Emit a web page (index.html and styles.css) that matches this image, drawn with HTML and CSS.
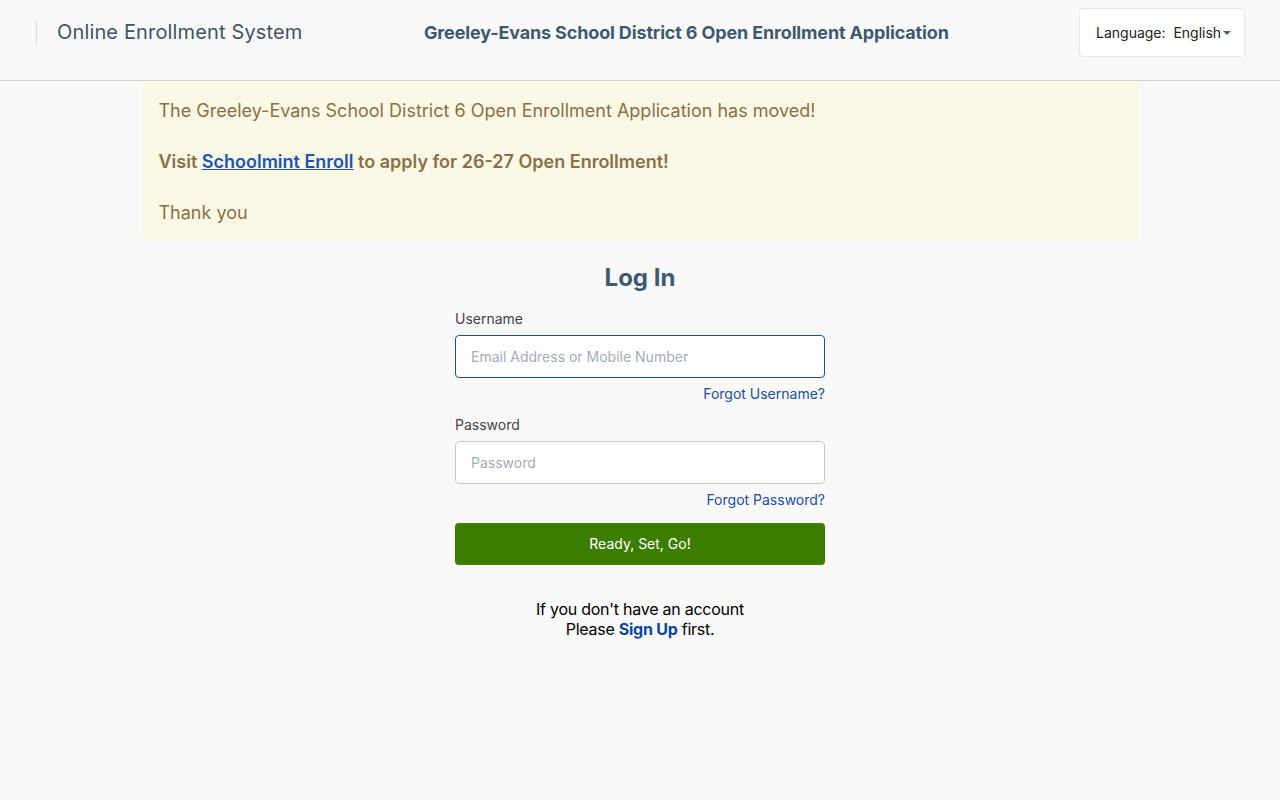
FILE: index.html
```html
<!DOCTYPE html>
<html>
  <head>
    <meta charset="utf-8">
    <meta name="viewport" content="width=device-width, initial-scale=1">
    <title>Online Enrollment System</title>
    <link rel="stylesheet" href="styles.css">
  </head>
  <body>
    <header class="topbar">
      <div class="brand">Online Enrollment System</div>
      <div class="district">Greeley-Evans School District 6 Open Enrollment Application</div>
      <button class="lang" type="button">Language:&nbsp; English<span class="caret"></span></button>
    </header>

    <main>
      <div class="notice">
        The Greeley-Evans School District 6 Open Enrollment Application has moved!<br><br>
        <strong>Visit <a href="#">Schoolmint Enroll</a> to apply for 26-27 Open Enrollment!</strong><br><br>
        Thank you
      </div>

      <section class="login">
        <h1>Log In</h1>
        <form>
          <label for="username">Username</label>
          <input id="username" class="focused" type="text" placeholder="Email Address or Mobile Number">
          <a class="forgot" href="#">Forgot Username?</a>

          <label for="password">Password</label>
          <input id="password" type="password" placeholder="Password">
          <a class="forgot" href="#">Forgot Password?</a>

          <button class="go" type="button">Ready, Set, Go!</button>
        </form>
        <p class="signup">If you don't have an account<br>Please <a href="#">Sign Up</a> first.</p>
      </section>
    </main>
  </body>
</html>
```

FILE: styles.css
```css
body {
  margin: 0;
  background: #f9f9f9;
  font-family: Inter, "Noto Sans", sans-serif;
  color: #222;
}

.topbar {
  height: 80px;
  border-bottom: 1px solid #d0d0d0;
  display: flex;
  align-items: flex-start;
  padding: 0 35px 0 36px;
}

.brand {
  margin-top: 20px;
  height: 25px;
  width: 367px;
  border-left: 1px solid #dcdcdc;
  padding-left: 20px;
  font-size: 20px;
  line-height: 24px;
  letter-spacing: 0.15px;
  color: #3e5565;
}

.district {
  margin-top: 21px;
  font-size: 18px;
  line-height: 24px;
  font-weight: 700;
  letter-spacing: -0.15px;
  color: #3f5a6f;
  flex: 1;
}

.lang {
  margin-top: 8px;
  width: 166px;
  height: 49px;
  box-sizing: border-box;
  padding: 0 0 0 16px;
  background: #fff;
  border: 1px solid #e6e8ec;
  border-radius: 4px;
  font-family: inherit;
  font-size: 14px;
  color: #222;
  display: flex;
  align-items: center;
}

.caret {
  display: inline-block;
  margin-left: 2px;
  border-top: 4px solid #4a5d6a;
  border-left: 4px solid transparent;
  border-right: 4px solid transparent;
}

main {
  width: 995px;
  margin: 0 auto;
}

.notice {
  background: #fbf8e5;
  color: #8b7047;
  font-size: 18px;
  line-height: 25.5px;
  padding: 17px 16px 15px;
  border-radius: 0 0 4px 4px;
}

.notice strong {
  font-weight: 600;
}

.notice a {
  color: #1b55b5;
}

.login {
  width: 370px;
  margin: 0 auto;
}

.login h1 {
  margin: 22px 0 16px;
  text-align: center;
  font-size: 24px;
  line-height: 30px;
  font-weight: 700;
  color: #3f5a6f;
}

form {
  display: flex;
  flex-direction: column;
}

label {
  font-size: 14px;
  line-height: 20px;
  color: #444;
  margin-bottom: 6px;
}

input {
  height: 43px;
  box-sizing: border-box;
  padding: 0 15px;
  border: 1px solid #c8c8c8;
  border-radius: 4px;
  background: #fff;
  font-family: inherit;
  font-size: 14px;
}

input::placeholder {
  color: #a3acb9;
}

input.focused {
  border-color: #1a4fa6;
}

.forgot {
  align-self: flex-end;
  margin: 6px 0 11px;
  font-size: 14px;
  line-height: 20px;
  color: #1a4fa6;
  text-decoration: none;
}

.go {
  margin-top: 2px;
  height: 42px;
  border: 0;
  border-radius: 4px;
  background: #3a7d00;
  color: #fff;
  font-family: inherit;
  font-size: 14px;
}

.signup {
  margin: 34px 0 0;
  text-align: center;
  font-size: 16px;
  line-height: 20px;
  letter-spacing: -0.25px;
  color: #000;
}

.signup a {
  color: #0d47a1;
  font-weight: 700;
  text-decoration: none;
}
```
